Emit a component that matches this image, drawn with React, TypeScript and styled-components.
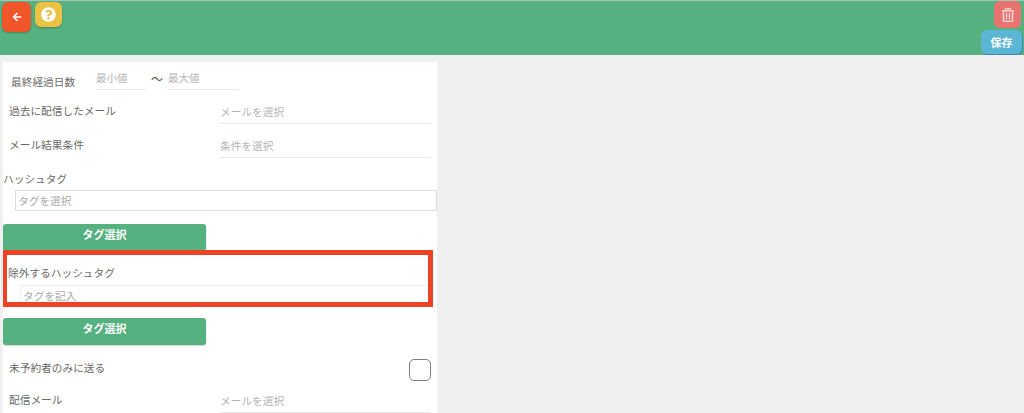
import React from "react";
import styled, { createGlobalStyle } from "styled-components";
import { FaArrowLeft, FaQuestionCircle, FaRegTrashAlt } from "react-icons/fa";

const Global = createGlobalStyle`
  html, body { margin: 0; padding: 0; background: #f0f0f0; overflow: hidden; }
  * { box-sizing: border-box; }
  body { font-family: "Noto Sans CJK JP", "Noto Sans", sans-serif; font-size: 10.7px; color: #6b6b6b; }
`;

const Page = styled.div`
  width: 1024px;
  height: 413px;
  overflow: hidden;
`;

const Header = styled.header`
  height: 55px;
  background: #55b280;
  border-top: 1px solid #a9c4b6;
  display: flex;
  justify-content: space-between;
  padding: 1px 2px 0 2px;
`;

const LeftTools = styled.div`
  display: flex;
  align-items: flex-start;
  gap: 4px;
`;

const RightTools = styled.div`
  display: flex;
  flex-direction: column;
  align-items: flex-end;
  gap: 2px;
  margin-top: -1px;
`;

const IconButton = styled.button<{ $bg: string; $w: number; $h: number }>`
  width: ${(p) => p.$w}px;
  height: ${(p) => p.$h}px;
  background: ${(p) => p.$bg};
  border: 0;
  border-radius: 6px;
  padding: 0;
  display: flex;
  align-items: center;
  justify-content: center;
  color: #fff;
  box-shadow: 0 1px 2px rgba(0, 0, 0, 0.25);
`;

const TrashButton = styled(IconButton)`
  margin-right: 1px;
  color: #fbdcda;
  box-shadow: none;
`;

const SaveButton = styled.button`
  width: 41px;
  height: 24px;
  background: #5bb5d5;
  border: 0;
  border-radius: 6px;
  padding: 0;
  color: #fff;
  font: 700 11px "Noto Sans CJK JP", sans-serif;
  box-shadow: 1px 1px 0 #3f86b5;
`;

const Panel = styled.main`
  width: 434px;
  height: 351px;
  margin: 7px 0 0 3px;
  background: #fff;
  overflow: hidden;
`;

const RangeRow = styled.div`
  height: 34px;
  display: flex;
  align-items: flex-start;
`;

const RangeLabel = styled.div`
  width: 85px;
  margin: 12px 0 0 8px;
  line-height: 16px;
`;

const RangeInput = styled.div<{ $w: number }>`
  width: ${(p) => p.$w}px;
  height: 28px;
  padding-top: 8px;
  line-height: 16px;
  font-size: 10.5px;
  color: #b4b4b4;
  border-bottom: 1px solid #e8e8e8;
`;

const Tilde = styled.div`
  width: 22px;
  margin-top: 9px;
  text-align: center;
  font-size: 12px;
  line-height: 16px;
  color: #555;
`;

const FieldRow = styled.div<{ $h: number }>`
  height: ${(p) => p.$h}px;
  display: grid;
  grid-template-columns: 211px 211px;
  padding-left: 6px;
`;

const FieldLabel = styled.div`
  line-height: 16px;
  padding-top: 7px;
`;

const FieldSelect = styled.div`
  height: 28px;
  padding-top: 8px;
  line-height: 16px;
  color: #b4b4b4;
  border-bottom: 1px solid #e8e8e8;
`;

const TagLabel = styled.div`
  height: 16px;
  margin-top: 1px;
  line-height: 16px;
`;

const TagBox = styled.div`
  height: 21px;
  margin: 3px 0 13px 12px;
  padding-left: 2px;
  border: 1px solid #dcdcdc;
  line-height: 19px;
  color: #aaa;
`;

const GreenButton = styled.button`
  display: block;
  width: 203px;
  height: 27px;
  background: #55b280;
  border: 0;
  border-radius: 3px;
  padding: 0 0 8px;
  color: #fff;
  font: 700 11px "Noto Sans CJK JP", sans-serif;
  box-shadow: 0 1px 2px rgba(0, 0, 0, 0.2);
`;

const Highlight = styled.section`
  width: 431px;
  height: 57px;
  margin: -1px 0 11px -1px;
  border: 5px solid #ee4226;
  padding: 10px 0 0 1px;
  overflow: hidden;
`;

const HighlightLabel = styled.div`
  line-height: 16px;
`;

const HighlightInput = styled.div`
  height: 20px;
  margin: 4px 0 0 12px;
  padding: 0 0 0 2px;
  border: 1px solid #efefef;
  border-right: 0;
  line-height: 19px;
  color: #aaa;
`;

const CheckRow = styled.div`
  height: 28px;
  margin-top: 12px;
  padding: 0 6px;
  display: flex;
  align-items: flex-start;
  justify-content: space-between;
`;

const CheckLabel = styled.div`
  line-height: 16px;
  padding-top: 3px;
`;

const CheckBox = styled.div`
  width: 22px;
  height: 22px;
  margin-top: 2px;
  border: 1.5px solid #7d7d7d;
  border-radius: 5px;
  background: #fff;
`;

export default function App() {
  return (
    <Page>
      <Global />
      <Header>
        <LeftTools>
          <IconButton $bg="#f0562a" $w={29} $h={30} aria-label="戻る">
            <FaArrowLeft size={10} />
          </IconButton>
          <IconButton $bg="#eac244" $w={27} $h={25} aria-label="ヘルプ">
            <FaQuestionCircle size={15} />
          </IconButton>
        </LeftTools>
        <RightTools>
          <TrashButton $bg="#e87470" $w={27} $h={27} aria-label="削除">
            <FaRegTrashAlt size={14} />
          </TrashButton>
          <SaveButton>保存</SaveButton>
        </RightTools>
      </Header>
      <Panel>
        <RangeRow>
          <RangeLabel>最終経過日数</RangeLabel>
          <RangeInput $w={50}>最小値</RangeInput>
          <Tilde>〜</Tilde>
          <RangeInput $w={71}>最大値</RangeInput>
        </RangeRow>
        <FieldRow $h={34}>
          <FieldLabel>過去に配信したメール</FieldLabel>
          <FieldSelect>メールを選択</FieldSelect>
        </FieldRow>
        <FieldRow $h={40}>
          <FieldLabel>メール結果条件</FieldLabel>
          <FieldSelect>条件を選択</FieldSelect>
        </FieldRow>
        <TagLabel>ハッシュタグ</TagLabel>
        <TagBox>タグを選択</TagBox>
        <GreenButton>タグ選択</GreenButton>
        <Highlight>
          <HighlightLabel>除外するハッシュタグ</HighlightLabel>
          <HighlightInput>タグを記入</HighlightInput>
        </Highlight>
        <GreenButton>タグ選択</GreenButton>
        <CheckRow>
          <CheckLabel>未予約者のみに送る</CheckLabel>
          <CheckBox />
        </CheckRow>
        <FieldRow $h={30}>
          <FieldLabel>配信メール</FieldLabel>
          <FieldSelect>メールを選択</FieldSelect>
        </FieldRow>
      </Panel>
    </Page>
  );
}
